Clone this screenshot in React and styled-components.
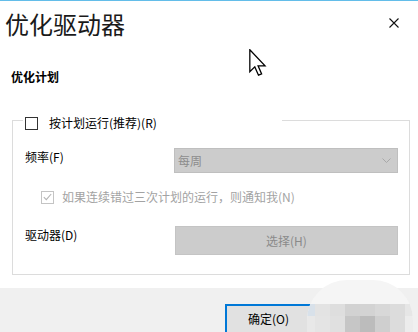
import React from 'react'
import styled, { createGlobalStyle } from 'styled-components'

const GlobalStyle = createGlobalStyle`
    html, body {
        margin: 0;
        padding: 0;
        background: #fff;
    }
    body {
        font-family: "Noto Sans CJK SC", "Microsoft YaHei", sans-serif;
        font-size: 12px;
        line-height: 16px;
        color: #000;
    }
`

const Dialog = styled.div`
    position: relative;
    width: 418px;
    height: 332px;
    box-sizing: border-box;
    border-top: 1px solid #63bde9;
    display: flex;
    flex-direction: column;
    overflow: hidden;
    background: #fff;
`

const Header = styled.div`
    display: flex;
    justify-content: space-between;
    align-items: flex-start;
    padding: 11px 19px 0 5px;
`

const Title = styled.h1`
    margin: 0;
    font-size: 24px;
    line-height: 24px;
    font-weight: 400;
    color: #1a1a1a;
`

const Close = styled.div`
    margin-top: 6px;
    width: 10px;
    height: 10px;
    display: flex;
`

const Body = styled.div`
    padding: 0 8px 0 12px;
`

const SectionTitle = styled.div`
    margin: 33px 0 0 -1px;
    font-weight: 700;
`

const GroupBox = styled.div`
    margin-top: 35px;
    border: 1px solid #dcdcdc;
    padding: 0 11px 19px 12px;
`

const Legend = styled.div`
    display: flex;
    align-items: center;
    width: 257px;
    height: 16px;
    margin: -6px 0 0 -2px;
    padding-left: 2px;
    background: #fff;
`

const Label = styled.span`
    margin-left: ${({ gap }) => gap || 11}px;
    color: ${({ disabled }) => (disabled ? '#a3a3a3' : '#000')};
    white-space: nowrap;
`

const Box = styled.span`
    flex: none;
    width: 13px;
    height: 13px;
    box-sizing: border-box;
    border: 1px solid ${({ disabled }) => (disabled ? '#c4c4c4' : '#333')};
    background: #fff;
    display: flex;
    align-items: center;
    justify-content: center;
`

const FieldRow = styled.div`
    display: grid;
    grid-template-columns: 149px 224px;
    align-items: start;
    margin-top: ${({ top }) => top}px;
`

const FieldLabel = styled.span`
    padding-top: ${({ offset }) => offset || 1}px;
    white-space: nowrap;
`

const Select = styled.div`
    height: 25px;
    box-sizing: border-box;
    border: 1px solid #bfbfbf;
    background: #cccccc;
    display: flex;
    align-items: center;
    justify-content: space-between;
    padding: 0 6px 0 3px;
    color: #8c8c8c;
`

const CheckRow = styled.div`
    display: flex;
    align-items: center;
    height: 16px;
    margin: 16px 0 0 16px;
`

const Button = styled.div`
    height: 29px;
    width: 223px;
    margin-left: 1px;
    box-sizing: border-box;
    border: 1px solid #c4c4c4;
    background: #cccccc;
    color: #8a8a8a;
    display: flex;
    align-items: center;
    justify-content: center;
`

const Footer = styled.div`
    margin-top: auto;
    height: 44px;
    background: #f0f0f0;
    display: flex;
    justify-content: flex-end;
    gap: 11px;
    padding: 16px 8px 0 0;
    box-sizing: border-box;
`

const FooterButton = styled.div`
    width: 87px;
    height: 30px;
    box-sizing: border-box;
    border: ${({ primary }) => (primary ? '2px solid #0078d7' : '1px solid #adadad')};
    background: #e1e1e1;
    display: flex;
    align-items: center;
    justify-content: center;
    flex: none;
`

const Cursor = styled.svg`
    position: absolute;
    left: 249px;
    top: 48px;
`

const Mosaic = styled.div`
    position: absolute;
    left: 307px;
    top: 279px;
    width: 106px;
    height: 53px;
    border-radius: 40px 40px 0 0;
    background: #f5f5f5;
    display: flex;
    flex-direction: column;
    justify-content: flex-end;
    overflow: hidden;
`

const TileRow = styled.div`
    display: grid;
    grid-template-columns: 8px 15px 15px 15px 15px 15px 15px 8px;
    height: ${({ h }) => h}px;
`

const Tile = styled.div`
    background: ${({ c }) => c};
`

const topTiles = ['#d8e1ea', '#e3e3e3', '#dedede', '#d2d2d2', '#d3d3d3', '#d8d8d8', '#dcdcdc', '#e6e6e6']
const bottomTiles = ['#e8e8e8', '#e4e4e4', '#e0e0e0', '#c6c6c6', '#bcbcbc', '#cfcfcf', '#dcdcdc', '#ececec']

const CheckBox = ({ disabled, checked }) => (
    <Box disabled={disabled}>
        {checked && (
            <svg width="9" height="8" viewBox="0 0 9 8">
                <path d="M0.8 4.2 L3.3 6.6 L8.2 1" fill="none" stroke="#b4b4b4" strokeWidth="1.1" />
            </svg>
        )}
    </Box>
)

const App = () => (
    <Dialog>
        <GlobalStyle />
        <Header>
            <Title>优化驱动器</Title>
            <Close>
                <svg width="10" height="10" viewBox="0 0 10 10">
                    <path d="M0.5 0.5 L9.5 9.5 M9.5 0.5 L0.5 9.5" stroke="#111" strokeWidth="1.1" />
                </svg>
            </Close>
        </Header>
        <Body>
            <SectionTitle>优化计划</SectionTitle>
            <GroupBox>
                <Legend>
                    <CheckBox />
                    <Label>按计划运行(推荐)(R)</Label>
                </Legend>
                <FieldRow top={17}>
                    <FieldLabel>频率(F)</FieldLabel>
                    <Select>
                        <span>每周</span>
                        <svg width="9" height="5" viewBox="0 0 9 5">
                            <path d="M0.5 0.5 L4.5 4.5 L8.5 0.5" fill="none" stroke="#a8a8a8" strokeWidth="1" />
                        </svg>
                    </Select>
                </FieldRow>
                <CheckRow>
                    <CheckBox disabled checked />
                    <Label disabled gap={8}>如果连续错过三次计划的运行，则通知我(N)</Label>
                </CheckRow>
                <FieldRow top={21}>
                    <FieldLabel>驱动器(D)</FieldLabel>
                    <Button>选择(H)</Button>
                </FieldRow>
            </GroupBox>
        </Body>
        <Footer>
            <FooterButton primary>确定(O)</FooterButton>
            <FooterButton>取消</FooterButton>
        </Footer>
        <Cursor width="18" height="27" viewBox="0 0 12.5 19">
            <path
                d="M0.5 0.5 L0.5 16 L4 12.6 L6.6 18.4 L8.8 17.5 L6.3 11.8 L11.2 11.8 Z"
                fill="#fff"
                stroke="#000"
                strokeWidth="0.9"
                strokeLinejoin="miter"
            />
        </Cursor>
        <Mosaic>
            <TileRow h={12}>
                {topTiles.map((c, i) => (
                    <Tile key={i} c={c} />
                ))}
            </TileRow>
            <TileRow h={17}>
                {bottomTiles.map((c, i) => (
                    <Tile key={i} c={c} />
                ))}
            </TileRow>
        </Mosaic>
    </Dialog>
)

export default App
